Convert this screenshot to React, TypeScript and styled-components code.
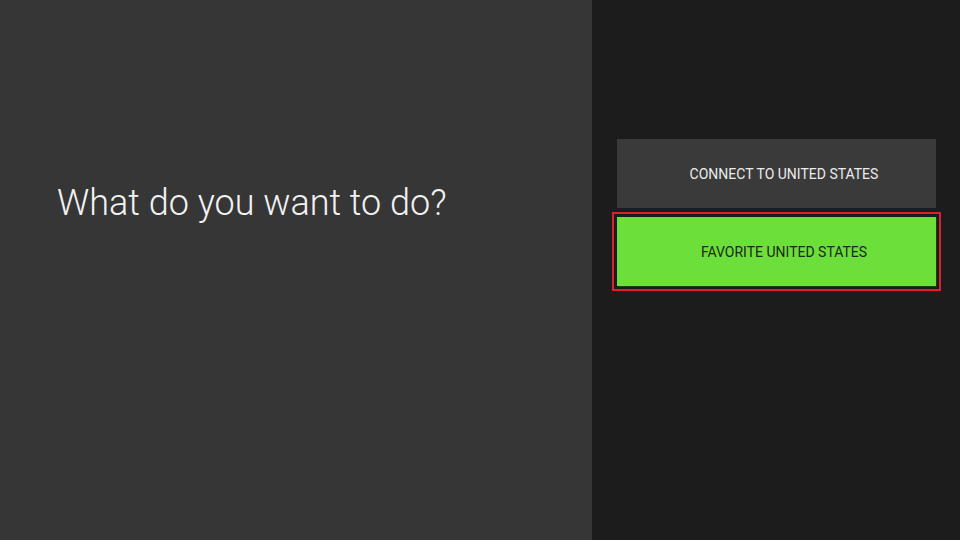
import React from 'react';
import styled, { createGlobalStyle } from 'styled-components';

const GlobalStyle = createGlobalStyle`
  html, body, #root {
    margin: 0;
    padding: 0;
    width: 100%;
    height: 100%;
  }
  body {
    font-family: Roboto, 'Noto Sans', sans-serif;
    background: #1b1c1b;
    overflow: hidden;
  }
`;

const Screen = styled.div`
  display: flex;
  width: 960px;
  height: 540px;
`;

const PromptPanel = styled.div`
  width: 592px;
  background: #363636;
  box-sizing: border-box;
  padding: 179px 0 0 57px;
`;

const Title = styled.h1`
  margin: 0;
  font-family: Roboto, sans-serif;
  font-weight: 300;
  font-size: 36px;
  line-height: 48px;
  color: #f2f2f2;
  letter-spacing: 0;
`;

const ActionPanel = styled.div`
  flex: 1;
  background: #1b1c1b;
  display: flex;
  flex-direction: column;
  gap: 9px;
  box-sizing: border-box;
  padding: 139px 24px 0 25px;
`;

const ActionButton = styled.button<{ $focused?: boolean }>`
  height: 69px;
  width: 100%;
  border: none;
  border-radius: 0;
  padding: 0 0 0 15px;
  font-family: Roboto, sans-serif;
  font-size: 14px;
  font-weight: 400;
  text-transform: uppercase;
  cursor: pointer;
  background: ${p => (p.$focused ? '#6cdf3a' : '#3a3a3a')};
  color: ${p => (p.$focused ? '#1c2818' : '#ececec')};
  box-shadow: ${p => (p.$focused ? '1px 1px 0 #1f3a14' : 'none')};
  outline: ${p => (p.$focused ? '2px solid #d9222c' : 'none')};
  outline-offset: 3px;
`;

const App = () => {
  return (
    <Screen>
      <GlobalStyle />
      <PromptPanel>
        <Title>What do you want to do?</Title>
      </PromptPanel>
      <ActionPanel>
        <ActionButton>Connect to United States</ActionButton>
        <ActionButton $focused>Favorite United States</ActionButton>
      </ActionPanel>
    </Screen>
  );
};

export default App;
